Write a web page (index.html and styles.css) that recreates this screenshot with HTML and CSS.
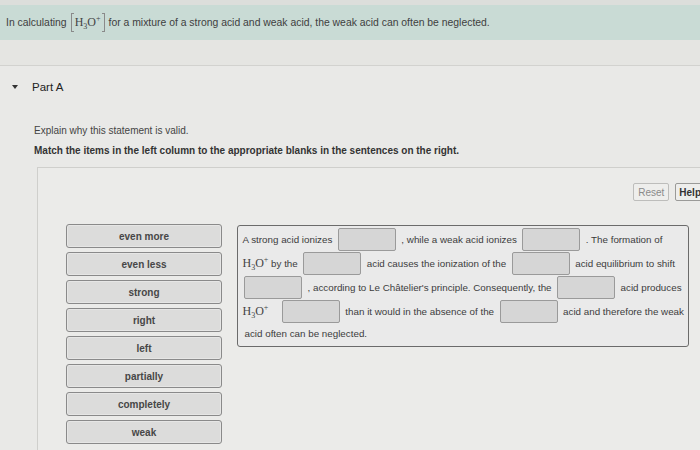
FILE: index.html
```html
<!DOCTYPE html>
<html lang="en">
<head>
<meta charset="utf-8">
<title>Part A</title>
<link rel="stylesheet" href="styles.css">
</head>
<body>
<div class="top-strip"></div>
<div class="prompt">
  <span>In calculating</span>
  <span class="conc"><span class="brk brk-l"></span><span class="chem">H<sub>3</sub>O<sup>+</sup></span><span class="brk brk-r"></span></span>
  <span>for a mixture of a strong acid and weak acid, the weak acid can often be neglected.</span>
</div>
<div class="prompt-gap"></div>

<div class="part">
  <span class="caret"></span>
  <span class="part-title">Part A</span>
</div>

<div class="intro">
  <p class="explain">Explain why this statement is valid.</p>
  <p class="instr">Match the items in the left column to the appropriate blanks in the sentences on the right.</p>
</div>

<div class="panel">
  <div class="toolbar">
    <button class="btn btn-reset">Reset</button>
    <button class="btn btn-help">Help</button>
  </div>
  <div class="workspace">
    <div class="items">
      <div class="item">even more</div>
      <div class="item">even less</div>
      <div class="item">strong</div>
      <div class="item">right</div>
      <div class="item">left</div>
      <div class="item">partially</div>
      <div class="item">completely</div>
      <div class="item">weak</div>
    </div>
    <div class="sentences">
      <div class="row">
        <span class="seg">A strong acid ionizes</span>
        <span class="blank"></span>
        <span class="seg">, while a weak acid ionizes</span>
        <span class="blank"></span>
        <span class="seg">. The formation of</span>
      </div>
      <div class="row">
        <span class="seg"><span class="chem">H<sub>3</sub>O<sup>+</sup></span> by the</span>
        <span class="blank"></span>
        <span class="seg">acid causes the ionization of the</span>
        <span class="blank"></span>
        <span class="seg">acid equilibrium to shift</span>
      </div>
      <div class="row row-indent">
        <span class="blank"></span>
        <span class="seg">, according to Le Châtelier's principle. Consequently, the</span>
        <span class="blank"></span>
        <span class="seg">acid produces</span>
      </div>
      <div class="row">
        <span class="seg seg-chem"><span class="chem">H<sub>3</sub>O<sup>+</sup></span></span>
        <span class="blank"></span>
        <span class="seg">than it would in the absence of the</span>
        <span class="blank"></span>
        <span class="seg">acid and therefore the weak</span>
      </div>
      <div class="row row-last">
        <span class="seg">acid often can be neglected.</span>
      </div>
    </div>
  </div>
</div>
</body>
</html>
```

FILE: styles.css
```css
* { box-sizing: border-box; }

html, body {
  margin: 0;
  padding: 0;
}

body {
  width: 700px;
  height: 450px;
  overflow: hidden;
  background: #e9e9e7;
  font-family: "Liberation Sans", Arial, sans-serif;
  font-size: 10px;
  color: #3a3a3a;
}

.top-strip {
  height: 5px;
  background: #dcdedb;
}

.prompt {
  height: 35px;
  background: #c9dbd5;
  display: flex;
  align-items: center;
  gap: 4px;
  padding-left: 6px;
  font-size: 10.4px;
  color: #404040;
  white-space: nowrap;
}

.conc {
  display: inline-flex;
  align-items: center;
  gap: 1px;
}

.brk {
  display: inline-block;
  width: 3px;
  height: 19px;
  border: 1px solid #8a8a8a;
}

.brk-l { border-right: none; }
.brk-r { border-left: none; }

.chem {
  font-family: "Liberation Serif", "Times New Roman", serif;
  font-size: 12px;
  color: #444;
}

.chem sub,
.chem sup {
  font-size: 8px;
  line-height: 0;
}

.prompt-gap {
  height: 26px;
  background: #e5e5e2;
  border-bottom: 1px solid #d2d2cf;
}

.part {
  height: 42px;
  display: flex;
  align-items: center;
  padding-left: 12px;
}

.caret {
  width: 0;
  height: 0;
  border-left: 3.5px solid transparent;
  border-right: 3.5px solid transparent;
  border-top: 4px solid #333;
  margin-right: 14px;
}

.part-title {
  font-size: 11.5px;
  color: #222;
}

.intro {
  padding-left: 34px;
}

.intro p {
  margin: 0;
  line-height: 14px;
}

.explain {
  margin-top: 16px !important;
  color: #444;
}

.instr {
  margin-top: 6px !important;
  font-weight: bold;
  color: #333;
}

.panel {
  margin-top: 9px;
  margin-left: 37px;
  width: 720px;
  height: 300px;
  background: #ebebe9;
  border: 1px solid #cfcfcc;
  border-right: none;
  padding: 15px 0 0 28px;
}

.toolbar {
  display: flex;
  justify-content: flex-end;
  gap: 6px;
  padding-right: 52px;
}

.btn {
  height: 18px;
  padding: 0 3px;
  font-family: "Liberation Sans", Arial, sans-serif;
  font-size: 10px;
  border-radius: 2px;
  background: #eeeeec;
}

.btn-reset {
  width: 36px;
  color: #8a8a8a;
  border: 1px solid #bdbdbb;
}

.btn-help {
  font-weight: bold;
  color: #333;
  border: 1px solid #9a9a98;
  text-align: left;
}

.workspace {
  display: flex;
  align-items: flex-start;
  gap: 15px;
  margin-top: 23px;
}

.items {
  width: 156px;
  display: flex;
  flex-direction: column;
  gap: 4px;
}

.item {
  height: 24px;
  display: flex;
  align-items: center;
  justify-content: center;
  background: #dcdcdb;
  border: 1px solid #8a8a8a;
  border-radius: 3px;
  box-shadow: inset 0 0 0 1px #e6e6e5;
  font-weight: bold;
  font-size: 10px;
  color: #474747;
}

.sentences {
  width: 452px;
  height: 122px;
  margin-top: 1px;
  border: 1px solid #6b6b6b;
  border-radius: 3px;
  background: #eaeaea;
  padding: 1px 3px;
  font-size: 9.8px;
}

.row {
  height: 24px;
  display: flex;
  align-items: center;
  gap: 4px;
  white-space: nowrap;
}

.row-indent {
  padding-left: 3px;
}

.row-last {
  height: 20px;
  padding-left: 2px;
}

.seg {
  padding: 0 1.5px;
  color: #3c3c3c;
}

.seg-chem {
  margin-right: 8px;
}

.blank {
  width: 58px;
  height: 23px;
  flex: none;
  background: #d6d6d6;
  border: 1px solid #9a9a9a;
  border-radius: 2px;
}
```
